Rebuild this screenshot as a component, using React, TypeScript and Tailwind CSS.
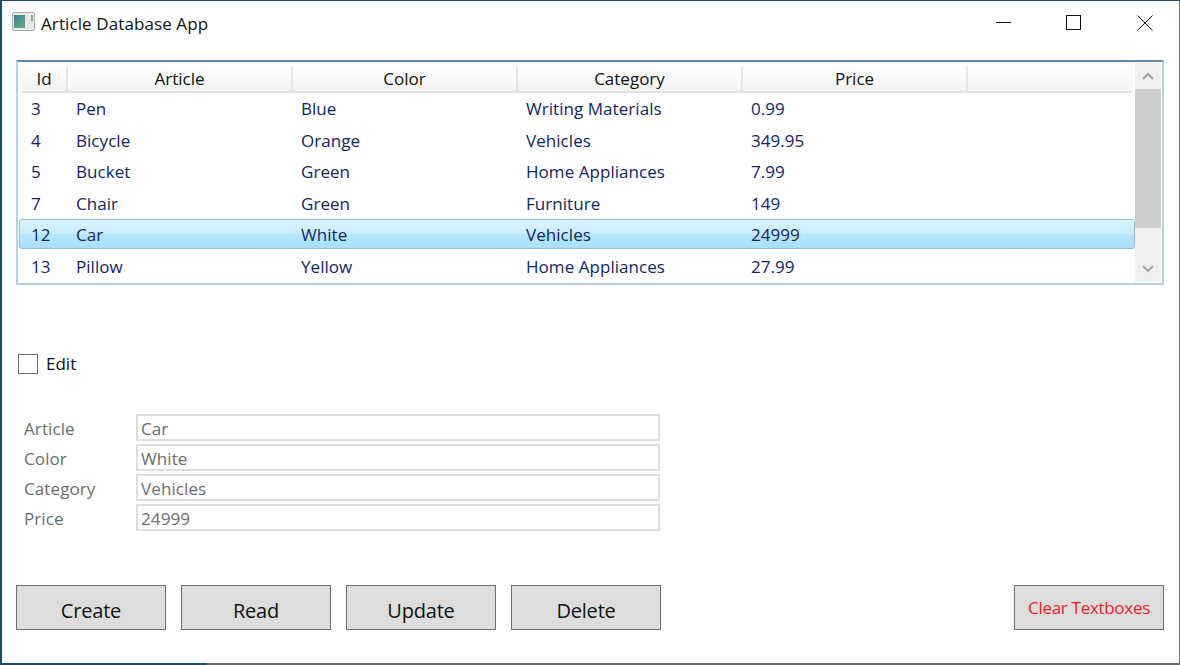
const font = { fontFamily: '"Open Sans", "Noto Sans", sans-serif' };
const rows = [
  ["3", "Pen", "Blue", "Writing Materials", "0.99"],
  ["4", "Bicycle", "Orange", "Vehicles", "349.95"],
  ["5", "Bucket", "Green", "Home Appliances", "7.99"],
  ["7", "Chair", "Green", "Furniture", "149"],
  ["12", "Car", "White", "Vehicles", "24999"],
  ["13", "Pillow", "Yellow", "Home Appliances", "27.99"],
];
const heads = [["Id", "w-[46px]"], ["Article", "w-[225px]"], ["Color", "w-[225px]"], ["Category", "w-[225px]"], ["Price", "w-[225px]"]];
const fields = [["Article", "Car"], ["Color", "White"], ["Category", "Vehicles"], ["Price", "24999"]];

function Btn({ label }: { label: string }) {
  return (
    <button className="w-[150px] h-[45px] bg-[#dddddd] border border-[#707070] text-[20px] text-[#111] pt-[6px] leading-none tracking-[-0.2px]">
      {label}
    </button>
  );
}

export default function App() {
  return (
    <div style={font} className="relative w-[1180px] h-[665px] bg-white border-t border-l-2 border-r border-b-2 border-t-[#1f4e64] border-l-[#1f4e64] border-r-[#6b6b6b] border-b-[#1f4e64] text-[#111]">
      <div className="absolute left-[205px] -right-[1px] -bottom-[2px] h-[2px] bg-[#6b6b6b]" />
      <div className="h-[59px] flex items-start pl-[10px]">
        <svg width="24" height="20" viewBox="0 0 24 20" className="mt-[11px]">
          <defs>
            <linearGradient id="ic" x1="0" y1="0" x2="0.6" y2="1">
              <stop offset="0" stopColor="#3f7f9a" />
              <stop offset="1" stopColor="#5fa888" />
            </linearGradient>
          </defs>
          <rect x="0.5" y="0.5" width="22" height="18" rx="1.5" fill="#e6eaeb" stroke="#a9b0b2" />
          <rect x="2" y="3" width="11" height="13" fill="url(#ic)" />
          <rect x="19" y="3" width="2" height="6" fill="#98a0a4" />
        </svg>
        <span className="ml-[5px] mt-[11px] text-[17px] leading-[24px] tracking-[0.1px]">Article Database App</span>
        <div className="ml-auto flex">
          <svg width="70" height="44" viewBox="0 0 70 44"><path d="M8 21.5H23" stroke="#111" strokeWidth="1" /></svg>
          <svg width="71" height="44" viewBox="0 0 71 44"><rect x="8.5" y="14.5" width="14" height="14" fill="none" stroke="#111" strokeWidth="1" /></svg>
          <svg width="50" height="44" viewBox="0 0 50 44"><path d="M8.5 14.5L23.5 29.5M23.5 14.5L8.5 29.5" stroke="#111" strokeWidth="1" /></svg>
        </div>
      </div>

      <div className="ml-[14px] w-[1148px] h-[225px] border-2 border-[#b9d0e0] border-t-[#5f8cab] bg-white flex pl-[4px] pt-[3px]">
        <div className="w-[1113px] shrink-0">
          <div className="flex w-[1110px] h-[28px] pt-[2px] bg-gradient-to-b from-white to-[#f3f4f5] border-b-2 border-[#e1e3e5] text-[17px]">
            {heads.map(([h, w]) => (
              <div key={h} className={`${w} flex items-center justify-center border-r-2 border-[#e4e6e8]`}>{h}</div>
            ))}
          </div>
          {rows.map((r, i) => (
            <div
              key={r[0]}
              className={`flex items-center text-[17px] tracking-[0.05px] text-[#14265e] ${i === 4 ? "h-[29.5px] mb-[2px] pt-[1px] -ml-[3px] pl-[2px] w-[1116px] rounded-[3px] border border-[#92c0e0] bg-[linear-gradient(to_bottom,#dcf4ff_0%,#c6ecff_50%,#b5e6fe_52%,#a9dffb_100%)]" : "h-[31.5px]"}`}
            >
              <div className="w-[45px] pl-[9px]">{r[0]}</div>
              <div className="w-[225px] pl-[9px]">{r[1]}</div>
              <div className="w-[225px] pl-[9px]">{r[2]}</div>
              <div className="w-[225px] pl-[9px]">{r[3]}</div>
              <div className="w-[225px] pl-[9px]">{r[4]}</div>
            </div>
          ))}
        </div>
        <div className="-mt-[2px] mb-[1px] w-[26px] flex flex-col bg-[#efefef]">
          <div className="h-[26px] flex items-center justify-center">
            <svg width="14" height="10" viewBox="0 0 14 10"><path d="M2 8L7 3L12 8" fill="none" stroke="#a3a3a3" strokeWidth="2" /></svg>
          </div>
          <div className="h-[139px] bg-[#cdcdcd]" />
          <div className="flex-1 flex items-end justify-center pb-[8px]">
            <svg width="14" height="10" viewBox="0 0 14 10"><path d="M2 2L7 7L12 2" fill="none" stroke="#a3a3a3" strokeWidth="2" /></svg>
          </div>
        </div>
      </div>

      <div className="ml-[16px] mt-[69px] flex items-center h-[20px]">
        <div className="w-[20px] h-[20px] border border-[#707070] bg-white" />
        <span className="ml-[8px] text-[17px]">Edit</span>
      </div>

      <div className="mt-[40px] ml-[22px] flex flex-col gap-[3px]">
        {fields.map(([l, v]) => (
          <div key={l} className="flex h-[27px] items-center text-[17px] tracking-[0.1px] text-[#6d6d6d]">
            <span className="w-[112px] pt-[2px]">{l}</span>
            <div className="w-[524px] h-[27px] border-2 border-[#dedede] pl-[3px] pt-[2px] flex items-center">{v}</div>
          </div>
        ))}
      </div>

      <div className="ml-[14px] mt-[54px] flex gap-[15px]">
        <Btn label="Create" />
        <Btn label="Read" />
        <Btn label="Update" />
        <Btn label="Delete" />
        <button className="ml-[338px] w-[150px] h-[45px] bg-[#dddddd] border border-[#707070] text-[17px] text-[#ee1c25] tracking-[-0.3px]">
          Clear Textboxes
        </button>
      </div>
    </div>
  );
}
